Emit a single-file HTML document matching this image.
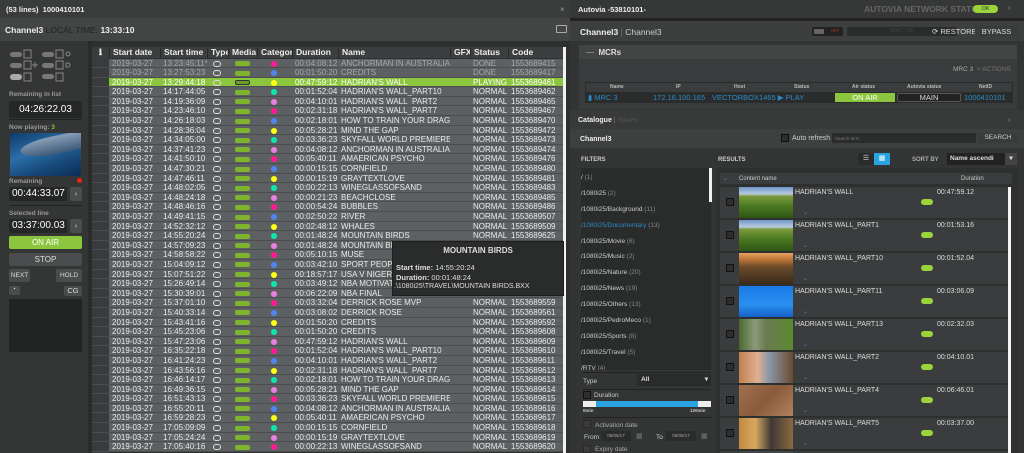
<!DOCTYPE html>
<html style="overflow:hidden;height:453px"><head><meta charset="utf-8">
<style>
*{margin:0;padding:0;box-sizing:border-box}
html,body{width:1024px;height:453px;overflow:hidden}
body{background:#2b2c2c;font-family:"Liberation Sans",sans-serif;color:#ddd}
#root{position:relative;width:1024px;height:453px;overflow:hidden}
.a{position:absolute}
.t{font-size:8px;white-space:nowrap}
#tb{left:92px;top:47px;width:471px}
.h{display:flex;height:11px;background:#3c3e3f;font-weight:bold;font-size:8.5px;color:#eee;line-height:11px}
.h span{border-left:1px solid #2a2a2a;padding-left:3px}
.r{display:flex;height:9.6px;line-height:9.6px;font-size:8px;background:#5d6062;border-bottom:1px solid #4b4d4f;color:#eaeaea;white-space:nowrap;overflow:hidden}
.r span,.h span{overflow:hidden;flex:none;position:relative}
.r span{padding-left:3px}
.r span:nth-child(1),.h span:nth-child(1){width:17px;background:#3a3b3c;border:none}
.r span:nth-child(2),.h span:nth-child(2){width:51px}
.r span:nth-child(3),.h span:nth-child(3){width:47px}
.r span:nth-child(4),.h span:nth-child(4){width:21px}
.r span:nth-child(5),.h span:nth-child(5){width:29px}
.r span:nth-child(6),.h span:nth-child(6){width:35px}
.r span:nth-child(7),.h span:nth-child(7){width:46px}
.r span:nth-child(8),.h span:nth-child(8){width:112px}
.r span:nth-child(9),.h span:nth-child(9){width:20px}
.r span:nth-child(10),.h span:nth-child(10){width:38px}
.r span:nth-child(11),.h span:nth-child(11){width:55px}
.r.dn{color:#a8a8a8}
.r.pl{background:#8cc63f;color:#fff}
.db{position:absolute;left:6px;top:2px;width:8px;height:6px;border:1px solid #ddd;border-radius:3px}
.ok{position:absolute;left:7px;top:2.5px;width:15px;height:5px;background:#7fb32e;border-radius:2px}
.d{position:absolute;left:14px;top:2px;width:6px;height:6px;border-radius:50%}
.p{background:#ff1a9a}.b{background:#4e86f5}.y{background:#ffff10}.g{background:#10e8b0}.v{background:#ef7fe8}
.btn{position:absolute;background:#4a4c4d;border-radius:2px;color:#ddd;font-size:7.5px;text-align:center}
.box{position:absolute;background:#252626;border-radius:2px;color:#fff;font-size:10px;text-align:center}
.lab{position:absolute;font-size:6.5px;font-weight:bold;color:#999}
.it{position:absolute;left:720px;width:288px;height:31px;background:#3a3c3d}
.it .cb{position:absolute;left:6px;top:11px;width:8px;height:8px;border:1px solid #111;background:#2d2e2f}
.it .th{position:absolute;left:19px;top:0;width:54px;height:31px}
.it .nm{position:absolute;left:75px;top:2px;font-size:7px;color:#ddd}
.it .du{position:absolute;left:217px;top:2px;font-size:7px;color:#ddd}
.it .pill{position:absolute;left:201px;top:12px;width:12px;height:6px;background:#9ad43a;border-radius:3px}
.it .ch{position:absolute;left:83px;top:22px;font-size:6px;color:#3a8fd0}
.fl{position:absolute;left:581px;font-size:6.5px;color:#ccc}
.fl i{color:#888;font-style:normal}
</style></head><body><div id="root">
<div class="a" style="left:0;top:0;width:570px;height:18px;background:#3a3b3b"></div>
<div class="a t" style="left:6px;top:5px;font-weight:bold;font-size:7.5px;color:#eee">(53 lines)&nbsp; 1000410101</div>
<div class="a" style="left:560px;top:5px;font-size:8px;color:#999">×</div>
<div class="a" style="left:0;top:18px;width:570px;height:23px;background:#434545"></div>
<div class="a t" style="left:5px;top:25px;font-size:8.5px"><b style="color:#eee">Channel3</b> <span style="color:#222">LOCAL TIME:</span> <b style="color:#eee">13:33:10</b></div>
<div class="a" style="left:556px;top:25px;width:11px;height:8px;border:1px solid #aaa;border-radius:1px"></div>
<div class="a" style="left:0;top:41px;width:88px;height:412px;background:#343535"></div>
<div class="a" style="left:88px;top:41px;width:4px;height:412px;background:#2a2b2b"></div>
<svg class="a" style="left:8px;top:49px" width="70" height="34" viewBox="0 0 70 34" fill="none" stroke="#888" stroke-width="1">
<rect x="2" y="3" width="12" height="5" rx="2.5" fill="#777" stroke="none"/><rect x="16" y="1" width="7" height="8"/>
<rect x="34" y="3" width="12" height="5" rx="2.5" fill="#777" stroke="none"/><rect x="48" y="1" width="7" height="8"/><circle cx="60" cy="5" r="2"/>
<rect x="2" y="14" width="12" height="5" rx="2.5" fill="#777" stroke="none"/><rect x="16" y="12" width="7" height="8"/><path d="M27 13v6M24 16h6"/>
<rect x="34" y="14" width="12" height="5" rx="2.5" fill="#777" stroke="none"/><rect x="48" y="12" width="7" height="8"/><path d="M58 14h2a2 2 0 010 4h-2z"/>
<rect x="2" y="25" width="12" height="6" rx="3" fill="#aaa" stroke="none"/><rect x="16" y="24" width="7" height="8"/>
<rect x="34" y="25" width="12" height="5" rx="2.5" fill="#777" stroke="none"/><rect x="48" y="24" width="7" height="8"/></svg>
<div class="lab" style="left:9px;top:91px">Remaining in list</div>
<div class="box" style="left:9px;top:101px;width:73px;height:17px;line-height:17px">04:26:22.03</div>
<div class="a" style="left:9px;top:119px;width:73px;height:1px;background:#222"></div>
<div class="lab" style="left:9px;top:124px">Now playing: <span style="color:#8cc63f">3</span></div>
<div class="a" style="left:10px;top:133px;width:71px;height:43px;background:linear-gradient(160deg,#0f3a6a,#2a6ea8 40%,#17497a 70%,#0b2c55);overflow:hidden"><div style="position:absolute;left:10px;top:3px;width:70px;height:18px;border-radius:50% 40% 30% 60%;background:linear-gradient(#8aa0b8,#3f5a78);transform:rotate(-12deg)"></div></div>
<div class="lab" style="left:9px;top:178px">Remaining</div>
<div class="a" style="left:77px;top:178px;width:5px;height:5px;border-radius:50%;background:#e21"></div>
<div class="box" style="left:9px;top:187px;width:58px;height:14px;line-height:14px;text-align:left;padding-left:3px">00:44:33.07</div>
<div class="btn" style="left:70px;top:187px;width:12px;height:14px;line-height:14px">›</div>
<div class="a" style="left:9px;top:205px;width:73px;height:1px;background:#222"></div>
<div class="lab" style="left:9px;top:210px">Selected line</div>
<div class="box" style="left:9px;top:219px;width:58px;height:14px;line-height:14px;text-align:left;padding-left:3px">03:37:00.03</div>
<div class="btn" style="left:70px;top:219px;width:12px;height:14px;line-height:14px">›</div>
<div class="btn" style="left:9px;top:236px;width:73px;height:13px;line-height:13px;background:#8cc63f;color:#fff;font-size:8px">ON AIR</div>
<div class="btn" style="left:9px;top:253px;width:73px;height:13px;line-height:13px;font-size:8px">STOP</div>
<div class="btn" style="left:9px;top:269px;width:21px;height:13px;line-height:13px;font-size:6.5px">NEXT</div>
<div class="btn" style="left:56px;top:269px;width:26px;height:13px;line-height:13px;font-size:6.5px">HOLD</div>
<div class="btn" style="left:9px;top:286px;width:11px;height:9px;font-size:5px">▪</div>
<div class="btn" style="left:64px;top:286px;width:18px;height:10px;line-height:10px">CG</div>
<div class="a" style="left:9px;top:299px;width:73px;height:53px;background:#222423"></div>
<div class="a" style="left:92px;top:41px;width:478px;height:412px;background:#2e2f2f"></div>
<div class="a" style="left:92px;top:47px;width:17px;height:406px;background:#3a3b3c"></div>
<div class="a" style="left:563px;top:47px;width:3px;height:406px;background:#f2f2f2"></div>
<div class="a" id="tb">
<div class="h"><span style="text-align:center;padding:0">ℹ</span><span>Start date</span><span>Start time</span><span>Type</span><span>Media</span><span>Category</span><span>Duration</span><span>Name</span><span>GFX</span><span>Status</span><span>Code</span></div>
<div style="height:0.5px"></div>
<div class="r dn"><span></span><span>2019-03-27</span><span>13:23:45:11*</span><span><i class="db"></i></span><span><i class="ok"></i></span><span><i class="d p"></i></span><span>00:04:08:12</span><span>ANCHORMAN IN AUSTRALIA</span><span></span><span>DONE</span><span>1553689415</span></div>
<div class="r dn"><span></span><span>2019-03-27</span><span>13:27:53:23</span><span><i class="db"></i></span><span><i class="ok"></i></span><span><i class="d b"></i></span><span>00:01:50:20</span><span>CREDITS</span><span></span><span>DONE</span><span>1553689417</span></div>
<div class="r pl"><span></span><span>2019-03-27</span><span>13:29:44:18</span><span><i class="db"></i></span><span><i class="ok" style="background:#6a9e25;border:1px solid #333"></i></span><span><i class="d y"></i></span><span>00:47:59:12</span><span>HADRIAN'S WALL</span><span></span><span>PLAYING</span><span>1553689461</span></div>
<div class="r"><span></span><span>2019-03-27</span><span>14:17:44:05</span><span><i class="db"></i></span><span><i class="ok"></i></span><span><i class="d g"></i></span><span>00:01:52:04</span><span>HADRIAN'S WALL_PART10</span><span></span><span>NORMAL</span><span>1553689462</span></div>
<div class="r"><span></span><span>2019-03-27</span><span>14:19:36:09</span><span><i class="db"></i></span><span><i class="ok"></i></span><span><i class="d v"></i></span><span>00:04:10:01</span><span>HADRIAN'S WALL_PART2</span><span></span><span>NORMAL</span><span>1553689465</span></div>
<div class="r"><span></span><span>2019-03-27</span><span>14:23:46:10</span><span><i class="db"></i></span><span><i class="ok"></i></span><span><i class="d p"></i></span><span>00:02:31:18</span><span>HADRIAN'S WALL_PART7</span><span></span><span>NORMAL</span><span>1553689467</span></div>
<div class="r"><span></span><span>2019-03-27</span><span>14:26:18:03</span><span><i class="db"></i></span><span><i class="ok"></i></span><span><i class="d b"></i></span><span>00:02:18:01</span><span>HOW TO TRAIN YOUR DRAGON</span><span></span><span>NORMAL</span><span>1553689470</span></div>
<div class="r"><span></span><span>2019-03-27</span><span>14:28:36:04</span><span><i class="db"></i></span><span><i class="ok"></i></span><span><i class="d y"></i></span><span>00:05:28:21</span><span>MIND THE GAP</span><span></span><span>NORMAL</span><span>1553689472</span></div>
<div class="r"><span></span><span>2019-03-27</span><span>14:34:05:00</span><span><i class="db"></i></span><span><i class="ok"></i></span><span><i class="d g"></i></span><span>00:03:36:23</span><span>SKYFALL WORLD PREMIERE</span><span></span><span>NORMAL</span><span>1553689473</span></div>
<div class="r"><span></span><span>2019-03-27</span><span>14:37:41:23</span><span><i class="db"></i></span><span><i class="ok"></i></span><span><i class="d v"></i></span><span>00:04:08:12</span><span>ANCHORMAN IN AUSTRALIA</span><span></span><span>NORMAL</span><span>1553689474</span></div>
<div class="r"><span></span><span>2019-03-27</span><span>14:41:50:10</span><span><i class="db"></i></span><span><i class="ok"></i></span><span><i class="d p"></i></span><span>00:05:40:11</span><span>AMAERICAN PSYCHO</span><span></span><span>NORMAL</span><span>1553689476</span></div>
<div class="r"><span></span><span>2019-03-27</span><span>14:47:30:21</span><span><i class="db"></i></span><span><i class="ok"></i></span><span><i class="d b"></i></span><span>00:00:15:15</span><span>CORNFIELD</span><span></span><span>NORMAL</span><span>1553689480</span></div>
<div class="r"><span></span><span>2019-03-27</span><span>14:47:46:11</span><span><i class="db"></i></span><span><i class="ok"></i></span><span><i class="d y"></i></span><span>00:00:15:19</span><span>GRAYTEXTLOVE</span><span></span><span>NORMAL</span><span>1553689481</span></div>
<div class="r"><span></span><span>2019-03-27</span><span>14:48:02:05</span><span><i class="db"></i></span><span><i class="ok"></i></span><span><i class="d g"></i></span><span>00:00:22:13</span><span>WINEGLASSOFSAND</span><span></span><span>NORMAL</span><span>1553689483</span></div>
<div class="r"><span></span><span>2019-03-27</span><span>14:48:24:18</span><span><i class="db"></i></span><span><i class="ok"></i></span><span><i class="d v"></i></span><span>00:00:21:23</span><span>BEACHCLOSE</span><span></span><span>NORMAL</span><span>1553689485</span></div>
<div class="r"><span></span><span>2019-03-27</span><span>14:48:46:16</span><span><i class="db"></i></span><span><i class="ok"></i></span><span><i class="d p"></i></span><span>00:00:54:24</span><span>BUBBLES</span><span></span><span>NORMAL</span><span>1553689486</span></div>
<div class="r"><span></span><span>2019-03-27</span><span>14:49:41:15</span><span><i class="db"></i></span><span><i class="ok"></i></span><span><i class="d b"></i></span><span>00:02:50:22</span><span>RIVER</span><span></span><span>NORMAL</span><span>1553689507</span></div>
<div class="r"><span></span><span>2019-03-27</span><span>14:52:32:12</span><span><i class="db"></i></span><span><i class="ok"></i></span><span><i class="d y"></i></span><span>00:02:48:12</span><span>WHALES</span><span></span><span>NORMAL</span><span>1553689509</span></div>
<div class="r"><span></span><span>2019-03-27</span><span>14:55:20:24</span><span><i class="db"></i></span><span><i class="ok"></i></span><span><i class="d g"></i></span><span>00:01:48:24</span><span>MOUNTAIN BIRDS</span><span></span><span>NORMAL</span><span>1553689625</span></div>
<div class="r"><span></span><span>2019-03-27</span><span>14:57:09:23</span><span><i class="db"></i></span><span><i class="ok"></i></span><span><i class="d v"></i></span><span>00:01:48:24</span><span>MOUNTAIN BIRDS</span><span></span><span>NORMAL</span><span>1553689626</span></div>
<div class="r"><span></span><span>2019-03-27</span><span>14:58:58:22</span><span><i class="db"></i></span><span><i class="ok"></i></span><span><i class="d p"></i></span><span>00:05:10:15</span><span>MUSE</span><span></span><span>NORMAL</span><span>1553689530</span></div>
<div class="r"><span></span><span>2019-03-27</span><span>15:04:09:12</span><span><i class="db"></i></span><span><i class="ok"></i></span><span><i class="d b"></i></span><span>00:03:42:10</span><span>SPORT PEOPLE</span><span></span><span>NORMAL</span><span>1553689531</span></div>
<div class="r"><span></span><span>2019-03-27</span><span>15:07:51:22</span><span><i class="db"></i></span><span><i class="ok"></i></span><span><i class="d y"></i></span><span>00:18:57:17</span><span>USA V NIGERIA</span><span></span><span>NORMAL</span><span>1553689532</span></div>
<div class="r"><span></span><span>2019-03-27</span><span>15:26:49:14</span><span><i class="db"></i></span><span><i class="ok"></i></span><span><i class="d g"></i></span><span>00:03:49:12</span><span>NBA MOTIVATION</span><span></span><span>NORMAL</span><span>1553689533</span></div>
<div class="r"><span></span><span>2019-03-27</span><span>15:30:39:01</span><span><i class="db"></i></span><span><i class="ok"></i></span><span><i class="d v"></i></span><span>00:06:22:09</span><span>NBA FINAL</span><span></span><span>NORMAL</span><span>1553689534</span></div>
<div class="r"><span></span><span>2019-03-27</span><span>15:37:01:10</span><span><i class="db"></i></span><span><i class="ok"></i></span><span><i class="d p"></i></span><span>00:03:32:04</span><span>DERRICK ROSE MVP</span><span></span><span>NORMAL</span><span>1553689559</span></div>
<div class="r"><span></span><span>2019-03-27</span><span>15:40:33:14</span><span><i class="db"></i></span><span><i class="ok"></i></span><span><i class="d b"></i></span><span>00:03:08:02</span><span>DERRICK ROSE</span><span></span><span>NORMAL</span><span>1553689561</span></div>
<div class="r"><span></span><span>2019-03-27</span><span>15:43:41:16</span><span><i class="db"></i></span><span><i class="ok"></i></span><span><i class="d y"></i></span><span>00:01:50:20</span><span>CREDITS</span><span></span><span>NORMAL</span><span>1553689592</span></div>
<div class="r"><span></span><span>2019-03-27</span><span>15:45:23:06</span><span><i class="db"></i></span><span><i class="ok"></i></span><span><i class="d g"></i></span><span>00:01:50:20</span><span>CREDITS</span><span></span><span>NORMAL</span><span>1553689608</span></div>
<div class="r"><span></span><span>2019-03-27</span><span>15:47:23:06</span><span><i class="db"></i></span><span><i class="ok"></i></span><span><i class="d v"></i></span><span>00:47:59:12</span><span>HADRIAN'S WALL</span><span></span><span>NORMAL</span><span>1553689609</span></div>
<div class="r"><span></span><span>2019-03-27</span><span>16:35:22:18</span><span><i class="db"></i></span><span><i class="ok"></i></span><span><i class="d p"></i></span><span>00:01:52:04</span><span>HADRIAN'S WALL_PART10</span><span></span><span>NORMAL</span><span>1553689610</span></div>
<div class="r"><span></span><span>2019-03-27</span><span>16:41:24:23</span><span><i class="db"></i></span><span><i class="ok"></i></span><span><i class="d b"></i></span><span>00:04:10:01</span><span>HADRIAN'S WALL_PART2</span><span></span><span>NORMAL</span><span>1553689611</span></div>
<div class="r"><span></span><span>2019-03-27</span><span>16:43:56:16</span><span><i class="db"></i></span><span><i class="ok"></i></span><span><i class="d y"></i></span><span>00:02:31:18</span><span>HADRIAN'S WALL_PART7</span><span></span><span>NORMAL</span><span>1553689612</span></div>
<div class="r"><span></span><span>2019-03-27</span><span>16:46:14:17</span><span><i class="db"></i></span><span><i class="ok"></i></span><span><i class="d g"></i></span><span>00:02:18:01</span><span>HOW TO TRAIN YOUR DRAGON</span><span></span><span>NORMAL</span><span>1553689613</span></div>
<div class="r"><span></span><span>2019-03-27</span><span>16:49:36:15</span><span><i class="db"></i></span><span><i class="ok"></i></span><span><i class="d v"></i></span><span>00:05:28:21</span><span>MIND THE GAP</span><span></span><span>NORMAL</span><span>1553689614</span></div>
<div class="r"><span></span><span>2019-03-27</span><span>16:51:43:13</span><span><i class="db"></i></span><span><i class="ok"></i></span><span><i class="d p"></i></span><span>00:03:36:23</span><span>SKYFALL WORLD PREMIERE</span><span></span><span>NORMAL</span><span>1553689615</span></div>
<div class="r"><span></span><span>2019-03-27</span><span>16:55:20:11</span><span><i class="db"></i></span><span><i class="ok"></i></span><span><i class="d b"></i></span><span>00:04:08:12</span><span>ANCHORMAN IN AUSTRALIA</span><span></span><span>NORMAL</span><span>1553689616</span></div>
<div class="r"><span></span><span>2019-03-27</span><span>16:59:28:23</span><span><i class="db"></i></span><span><i class="ok"></i></span><span><i class="d y"></i></span><span>00:05:40:11</span><span>AMAERICAN PSYCHO</span><span></span><span>NORMAL</span><span>1553689617</span></div>
<div class="r"><span></span><span>2019-03-27</span><span>17:05:09:09</span><span><i class="db"></i></span><span><i class="ok"></i></span><span><i class="d g"></i></span><span>00:00:15:15</span><span>CORNFIELD</span><span></span><span>NORMAL</span><span>1553689618</span></div>
<div class="r"><span></span><span>2019-03-27</span><span>17:05:24:24</span><span><i class="db"></i></span><span><i class="ok"></i></span><span><i class="d v"></i></span><span>00:00:15:19</span><span>GRAYTEXTLOVE</span><span></span><span>NORMAL</span><span>1553689619</span></div>
<div class="r"><span></span><span>2019-03-27</span><span>17:05:40:16</span><span><i class="db"></i></span><span><i class="ok"></i></span><span><i class="d p"></i></span><span>00:00:22:13</span><span>WINEGLASSOFSAND</span><span></span><span>NORMAL</span><span>1553689620</span></div>
</div>
<div class="a" style="left:392px;top:241px;width:172px;height:55px;background:#2a2b2b;border:1px solid #1d1d1d;font-size:7.5px;color:#ddd">
<div style="text-align:center;font-weight:bold;margin-top:4px;font-size:8px">MOUNTAIN BIRDS</div>
<div style="margin:8px 0 0 3px"><b>Start time:</b> 14:55:20:24</div>
<div style="margin:1px 0 0 3px"><b>Duration:</b> 00:01:48:24</div>
<div style="margin:1px 0 0 1px;font-size:7px">.\1080i25\TRAVEL\MOUNTAIN BIRDS.BXX</div>
</div>
<div class="a" style="left:570px;top:0;width:454px;height:453px;background:#333434"></div>
<div class="a" style="left:570px;top:0;width:454px;height:18px;background:#363737"></div>
<div class="a t" style="left:578px;top:5px;font-size:7.5px;font-weight:bold;color:#eee">Autovia -53810101-</div>
<div class="a t" style="left:864px;top:4px;font-size:8.5px;font-weight:bold;color:#666">AUTOVIA NETWORK STATUS</div>
<div class="a" style="left:973px;top:5px;width:25px;height:8px;background:#9ad43a;border-radius:4px;font-size:5.5px;color:#333;text-align:center;line-height:8px">OK</div>
<div class="a" style="left:1007px;top:4px;font-size:8px;color:#666">×</div>
<div class="a" style="left:570px;top:18px;width:454px;height:3px;background:#222"></div>
<div class="a" style="left:570px;top:21px;width:454px;height:20px;background:#3d3f3f"></div>
<div class="a t" style="left:580px;top:27px;font-size:8.5px"><b style="color:#eee">Channel3</b> <span style="color:#777">|</span> <span style="color:#ccc">Channel3</span></div>
<div class="a" style="left:812px;top:27px;width:31px;height:9px;background:#222;border-radius:2px"></div>
<div class="a" style="left:814px;top:29px;width:10px;height:5px;background:#666;border-radius:1px"></div>
<div class="a" style="left:831px;top:28px;font-size:4px;color:#c33">OFF</div>
<div class="a" style="left:847px;top:27px;width:110px;height:9px;background:#2a2b2b;border-radius:2px;font-size:5px;color:#444;text-align:center;line-height:9px">INACTIVE</div>
<div class="a t" style="left:932px;top:27px;font-size:7.5px;color:#ddd">⟳ RESTORE</div>
<div class="a" style="left:975px;top:26px;width:43px;height:11px;background:#3a3c3c;font-size:7.5px;color:#ddd;text-align:center;line-height:11px">BYPASS</div>
<div class="a" style="left:579px;top:45px;width:438px;height:14px;background:#434545"></div>
<div class="a t" style="left:586px;top:48px;font-size:8px;color:#ddd;font-weight:bold"><span style="color:#888">—</span>&nbsp; MCRs</div>
<div class="a" style="left:579px;top:59px;width:438px;height:50px;background:#3a3b3c"></div>
<div class="a t" style="left:953px;top:66px;font-size:6.5px;color:#aaa">MRC 3 &nbsp;<span style="color:#777">&lt; ACTIONS</span></div>
<div class="a" style="left:585px;top:82px;width:428px;height:21px;background:#2a2b2b"></div>
<div class="a" style="left:586px;top:83px;width:426px;height:9px;background:#3a3c3d"></div>
<div class="a t" style="left:610px;top:84px;font-size:5px;color:#bbb;font-weight:bold">Name</div>
<div class="a t" style="left:676px;top:84px;font-size:5px;color:#bbb;font-weight:bold">IP</div>
<div class="a t" style="left:734px;top:84px;font-size:5px;color:#bbb;font-weight:bold">Host</div>
<div class="a t" style="left:794px;top:84px;font-size:5px;color:#bbb;font-weight:bold">Status</div>
<div class="a t" style="left:852px;top:84px;font-size:5px;color:#bbb;font-weight:bold">Air status</div>
<div class="a t" style="left:907px;top:84px;font-size:5px;color:#bbb;font-weight:bold">Autovia status</div>
<div class="a t" style="left:979px;top:84px;font-size:5px;color:#bbb;font-weight:bold">NetID</div>
<div class="a t" style="left:588px;top:93px;font-size:7.5px;color:#2b8cc8">▮ MRC 3</div>
<div class="a t" style="left:653px;top:93px;font-size:7.5px;color:#2b8cc8">172.16.100.165</div>
<div class="a t" style="left:712px;top:93px;font-size:7.5px;color:#2b8cc8">VECTORBOX1465 ▶ PLAY</div>
<div class="a" style="left:835px;top:93px;width:60px;height:9px;background:#8cc63f;font-size:7.5px;color:#fff;text-align:center;line-height:9px">ON AIR</div>
<div class="a" style="left:897px;top:93px;width:64px;height:9px;background:#222;border:1px solid #555;border-radius:2px;font-size:7.5px;color:#ddd;text-align:center;line-height:8px">MAIN</div>
<div class="a t" style="left:964px;top:93px;font-size:7.5px;color:#2b8cc8">1000410101</div>
<div class="a" style="left:570px;top:110px;width:454px;height:19px;background:#383939"></div>
<div class="a t" style="left:578px;top:117px;font-size:7px"><b style="color:#eee">Catalogue</b> <span style="color:#777">|</span> <span style="color:#555">Issues</span></div>
<div class="a" style="left:1007px;top:116px;font-size:8px;color:#666">×</div>
<div class="a" style="left:570px;top:129px;width:454px;height:19px;background:#3e4040"></div>
<div class="a t" style="left:580px;top:136px;font-size:7px;font-weight:bold;color:#eee">Channel3</div>
<div class="a" style="left:781px;top:134px;width:8px;height:8px;border:1px solid #111;background:#2d2e2f"></div>
<div class="a t" style="left:792px;top:135px;font-size:7px;color:#ccc">Auto refresh</div>
<div class="a" style="left:832px;top:133px;width:144px;height:10px;background:#2b2c2c;font-size:4.5px;color:#777;padding:3px 3px">Search term</div>
<div class="a" style="left:978px;top:133px;width:40px;height:10px;background:#3a3c3c;font-size:6.5px;color:#ccc;text-align:center;line-height:10px">SEARCH</div>
<div class="a t" style="left:581px;top:157px;font-size:6px;font-weight:bold;color:#ccc">FILTERS</div>
<div class="a t" style="left:718px;top:157px;font-size:6px;font-weight:bold;color:#ccc">RESULTS</div>
<div class="a" style="left:858px;top:153px;width:16px;height:12px;background:#2a2b2b;color:#ddd;font-size:7px;text-align:center;line-height:12px">☰</div>
<div class="a" style="left:874px;top:153px;width:16px;height:12px;background:#29a3e0;color:#fff;font-size:7px;text-align:center;line-height:12px">▦</div>
<div class="a t" style="left:912px;top:157px;font-size:6px;font-weight:bold;color:#aaa">SORT BY</div>
<div class="a" style="left:947px;top:153px;width:70px;height:12px;background:#222;font-size:6.5px;color:#ddd;font-weight:bold;line-height:12px;padding-left:3px;white-space:nowrap;overflow:hidden">Name ascendi<span style="position:absolute;right:0;top:0;width:12px;background:#444;text-align:center">▾</span></div>
<div class="a" style="left:581px;top:168px;width:130px;height:202px;background:#2a2b2b;overflow:hidden">
<div class="fl" style="left:0;top:6px">/ <i>(1)</i></div>
<div class="fl" style="left:0;top:22px">/1080i25 <i>(2)</i></div>
<div class="fl" style="left:0;top:38px">/1080i25/Background <i>(11)</i></div>
<div class="fl" style="left:0;top:54px;color:#2b8cc8">/1080i25/Documentary <i>(13)</i></div>
<div class="fl" style="left:0;top:70px">/1080i25/Movie <i>(6)</i></div>
<div class="fl" style="left:0;top:85px">/1080i25/Music <i>(2)</i></div>
<div class="fl" style="left:0;top:101px">/1080i25/Nature <i>(20)</i></div>
<div class="fl" style="left:0;top:117px">/1080i25/News <i>(19)</i></div>
<div class="fl" style="left:0;top:133px">/1080i25/Others <i>(13)</i></div>
<div class="fl" style="left:0;top:149px">/1080i25/PedroMeco <i>(1)</i></div>
<div class="fl" style="left:0;top:165px">/1080i25/Sports <i>(8)</i></div>
<div class="fl" style="left:0;top:181px">/1080i25/Travel <i>(5)</i></div>
<div class="fl" style="left:0;top:197px">/RTV <i>(4)</i></div>
</div>
<div class="a" style="left:709px;top:168px;width:3px;height:34px;background:#f0f0f0"></div>
<div class="a" style="left:583px;top:372px;width:128px;height:1px;background:#222"></div>
<div class="a t" style="left:583px;top:378px;font-size:6.5px;color:#ccc">Type</div>
<div class="a" style="left:637px;top:374px;width:74px;height:12px;background:#2a2b2b;font-size:6.5px;color:#ddd;font-weight:bold;line-height:12px;padding-left:4px">All<span style="float:right;margin-right:3px">▾</span></div>
<div class="a" style="left:583px;top:389px;width:128px;height:1px;background:#222"></div>
<div class="a" style="left:583px;top:391px;width:8px;height:8px;border:1px solid #111;background:#2d2e2f"></div>
<div class="a t" style="left:594px;top:392px;font-size:6.5px;color:#ccc">Duration</div>
<div class="a" style="left:583px;top:401px;width:128px;height:6px;background:#eee"></div>
<div class="a" style="left:596px;top:401px;width:102px;height:6px;background:#29a3e0"></div>
<div class="a t" style="left:583px;top:408px;font-size:4.5px;color:#ccc;font-weight:bold">0min</div>
<div class="a t" style="left:690px;top:408px;font-size:4.5px;color:#ccc;font-weight:bold">120min</div>
<div class="a" style="left:583px;top:417px;width:128px;height:1px;background:#222"></div>
<div class="a" style="left:583px;top:420px;width:8px;height:8px;border:1px solid #2a2a2a;background:#3a3b3b"></div>
<div class="a t" style="left:595px;top:422px;font-size:6.5px;color:#aaa">Activation date</div>
<div class="a t" style="left:584px;top:434px;font-size:6.5px;color:#ccc">From</div>
<div class="a" style="left:601px;top:431px;width:30px;height:10px;background:#2a2b2b;font-size:4.5px;color:#aaa;text-align:center;line-height:10px">05/05/17</div>
<div class="a t" style="left:636px;top:432px;font-size:7px;color:#777">▦</div>
<div class="a t" style="left:656px;top:434px;font-size:6.5px;color:#ccc">To</div>
<div class="a" style="left:666px;top:431px;width:30px;height:10px;background:#2a2b2b;font-size:4.5px;color:#aaa;text-align:center;line-height:10px">05/05/17</div>
<div class="a t" style="left:701px;top:432px;font-size:7px;color:#777">▦</div>
<div class="a" style="left:583px;top:445px;width:8px;height:8px;border:1px solid #2a2a2a;background:#3a3b3b"></div>
<div class="a t" style="left:595px;top:446px;font-size:6.5px;color:#aaa">Expiry date</div>
<div class="a" style="left:716px;top:168px;width:302px;height:285px;background:#2e2f2f"></div>
<div class="a" style="left:720px;top:173px;width:292px;height:11px;background:#3a3c3d"></div>
<div class="a t" style="left:723px;top:175px;font-size:6px;color:#3a8fd0">⌄</div>
<div class="a t" style="left:739px;top:176px;font-size:6px;color:#ccc">Content name</div>
<div class="a t" style="left:961px;top:176px;font-size:6px;color:#ccc">Duration</div>
<div class="a" style="left:1008px;top:187px;width:3px;height:266px;background:#f4f4f4"></div>
<div class="it" style="top:187px"><div class="cb"></div><div class="th" style="background:linear-gradient(#6f95c8 0,#b8cbe0 22%,#7c9a3c 30%,#4c7a22 60%,#2e5515)"></div><div class="nm">HADRIAN'S WALL</div><div class="du">00:47:59.12</div><div class="pill"></div><div class="ch">⌄</div></div>
<div class="it" style="top:220px"><div class="cb"></div><div class="th" style="background:linear-gradient(#6f95c8 0,#b8cbe0 22%,#7c9a3c 30%,#4c7a22 60%,#2e5515)"></div><div class="nm">HADRIAN'S WALL_PART1</div><div class="du">00:01:53.16</div><div class="pill"></div><div class="ch">⌄</div></div>
<div class="it" style="top:253px"><div class="cb"></div><div class="th" style="background:linear-gradient(#e8a060 0,#c07838 20%,#6a4a2a 45%,#3a2a18)"></div><div class="nm">HADRIAN'S WALL_PART10</div><div class="du">00:01:52.04</div><div class="pill"></div><div class="ch">⌄</div></div>
<div class="it" style="top:286px"><div class="cb"></div><div class="th" style="background:linear-gradient(#1a7ae8,#2a90f0 60%,#1660c8)"></div><div class="nm">HADRIAN'S WALL_PART11</div><div class="du">00:03:06.09</div><div class="pill"></div><div class="ch">⌄</div></div>
<div class="it" style="top:319px"><div class="cb"></div><div class="th" style="background:linear-gradient(90deg,#4a6a30,#8a9a7a 30%,#6a7a50 50%,#5a8a30)"></div><div class="nm">HADRIAN'S WALL_PART13</div><div class="du">00:02:32.03</div><div class="pill"></div><div class="ch">⌄</div></div>
<div class="it" style="top:352px"><div class="cb"></div><div class="th" style="background:linear-gradient(90deg,#c08050,#e0b090 35%,#8a98a8 55%,#6a4a30)"></div><div class="nm">HADRIAN'S WALL_PART2</div><div class="du">00:04:10.01</div><div class="pill"></div><div class="ch">⌄</div></div>
<div class="it" style="top:385px"><div class="cb"></div><div class="th" style="background:linear-gradient(135deg,#a07050,#8a5a3a 50%,#b08060)"></div><div class="nm">HADRIAN'S WALL_PART4</div><div class="du">00:06:46.01</div><div class="pill"></div><div class="ch">⌄</div></div>
<div class="it" style="top:418px"><div class="cb"></div><div class="th" style="background:linear-gradient(90deg,#c08a40,#d8a860 30%,#403838 60%,#8a6a40)"></div><div class="nm">HADRIAN'S WALL_PART5</div><div class="du">00:03:37.00</div><div class="pill"></div><div class="ch">⌄</div></div>
<div class="it" style="top:451px;height:2px"><div class="th" style="height:2px;background:#444"></div></div>
</div></body></html>
